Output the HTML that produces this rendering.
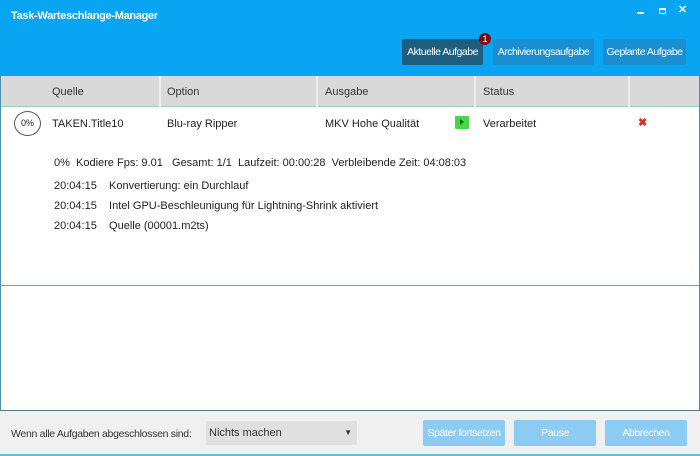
<!DOCTYPE html>
<html><head><style>
*{margin:0;padding:0;box-sizing:border-box}
body{width:700px;height:456px;overflow:hidden;font-family:"Liberation Sans",sans-serif;font-size:11px;color:#222;background:#fff;position:relative}
div,span{white-space:nowrap}
.hdr{position:absolute;left:0;top:0;width:700px;height:76px;background:#09a5f3}
.t{position:absolute;left:11px;top:10px;color:#fff;font-weight:bold;font-size:11px;letter-spacing:-0.3px}
.b{position:absolute;height:26px;top:39px;color:#fff;font-size:10.5px;text-align:center;line-height:26px;background:#1a8ed0;border-radius:2px;letter-spacing:-0.5px}
.a{position:absolute}
.th{position:absolute;top:76px;left:0;width:700px;height:31px;background:#d9d9d9;border-bottom:1px solid #9bd0c8}
.th span{position:absolute;top:10px;color:#333}
.sep{position:absolute;top:76px;width:2px;height:31px;background:#eee}
.fb{position:absolute;top:420px;height:26px;width:82px;background:#8ccbf2;color:#fff;text-align:center;line-height:26px;border-radius:2px;font-size:10.5px;letter-spacing:-0.4px}
</style></head><body>
<div class="hdr"></div>
<div class="t">Task-Warteschlange-Manager</div>
<div class="a" style="left:637px;top:12px;width:7px;height:2px;background:#fff"></div>
<div class="a" style="left:659px;top:8px;width:7px;height:6px;border:1px solid #fff;border-top-width:2px"></div>
<div class="a" style="left:678px;top:3px;color:#fff;font-weight:bold;font-size:11px">✕</div>
<div class="b" style="left:402px;width:81px;background:#1e5f7f">Aktuelle Aufgabe</div>
<div class="a" style="left:479px;top:33px;width:12px;height:12px;border-radius:6px;background:#7a0d0d;color:#fff;font-size:9px;text-align:center;line-height:12px">1</div>
<div class="b" style="left:493px;width:101px">Archivierungsaufgabe</div>
<div class="b" style="left:603px;width:83px">Geplante Aufgabe</div>
<div class="th"><span style="left:52px">Quelle</span><span style="left:167px">Option</span><span style="left:325px">Ausgabe</span><span style="left:483px">Status</span></div>
<div class="sep" style="left:159px"></div><div class="sep" style="left:316px"></div><div class="sep" style="left:474px"></div><div class="sep" style="left:628px"></div>
<div class="a" style="left:0;top:76px;width:1px;height:380px;background:#4a90a8"></div>
<div class="a" style="left:699px;top:76px;width:1px;height:380px;background:#4a90a8"></div>
<div class="a" style="left:14px;top:111px;width:27px;height:25px;border:1px solid #555;border-radius:50%;font-size:9px;text-align:center;line-height:23px">0%</div>
<div class="a" style="left:52px;top:118px">TAKEN.Title10</div>
<div class="a" style="left:167px;top:118px">Blu-ray Ripper</div>
<div class="a" style="left:325px;top:118px">MKV Hohe Qualität</div>
<div class="a" style="left:455px;top:116px;width:14px;height:13px;background:#46d646;border-radius:1px"><div style="position:absolute;left:5px;top:3px;border-left:4px solid #0a6a0a;border-top:3px solid transparent;border-bottom:3px solid transparent"></div></div>
<div class="a" style="left:483px;top:118px">Verarbeitet</div>
<div class="a" style="left:638px;top:116px;color:#d03020;font-weight:bold;font-size:11px">✖</div>
<div class="a" style="left:54px;top:157px">0%&nbsp; Kodiere Fps: 9.01 &nbsp; Gesamt: 1/1 &nbsp;Laufzeit: 00:00:28 &nbsp;Verbleibende Zeit: 04:08:03</div>
<div class="a" style="left:54px;top:180px">20:04:15 &nbsp;&nbsp; Konvertierung: ein Durchlauf</div>
<div class="a" style="left:54px;top:200px">20:04:15 &nbsp;&nbsp; Intel GPU-Beschleunigung für Lightning-Shrink aktiviert</div>
<div class="a" style="left:54px;top:220px">20:04:15 &nbsp;&nbsp; Quelle (00001.m2ts)</div>
<div class="a" style="left:1px;top:285px;width:698px;height:1px;background:#5aa9b8"></div>
<div class="a" style="left:0;top:410px;width:700px;height:46px;background:#f0f0f0;border-top:1px solid #5a7a88;border-bottom:2px solid #5ac0e0"></div>
<div class="a" style="left:11px;top:428px;color:#333;font-size:10.5px;letter-spacing:-0.3px">Wenn alle Aufgaben abgeschlossen sind:</div>
<div class="a" style="left:206px;top:421px;width:151px;height:24px;background:#e0e0e0;line-height:24px;padding-left:3px;color:#333">Nichts machen<span style="position:absolute;right:5px;top:0;font-size:8px">▼</span></div>
<div class="fb" style="left:423px">Später fortsetzen</div>
<div class="fb" style="left:514px">Pause</div>
<div class="fb" style="left:605px">Abbrechen</div>
</body></html>
